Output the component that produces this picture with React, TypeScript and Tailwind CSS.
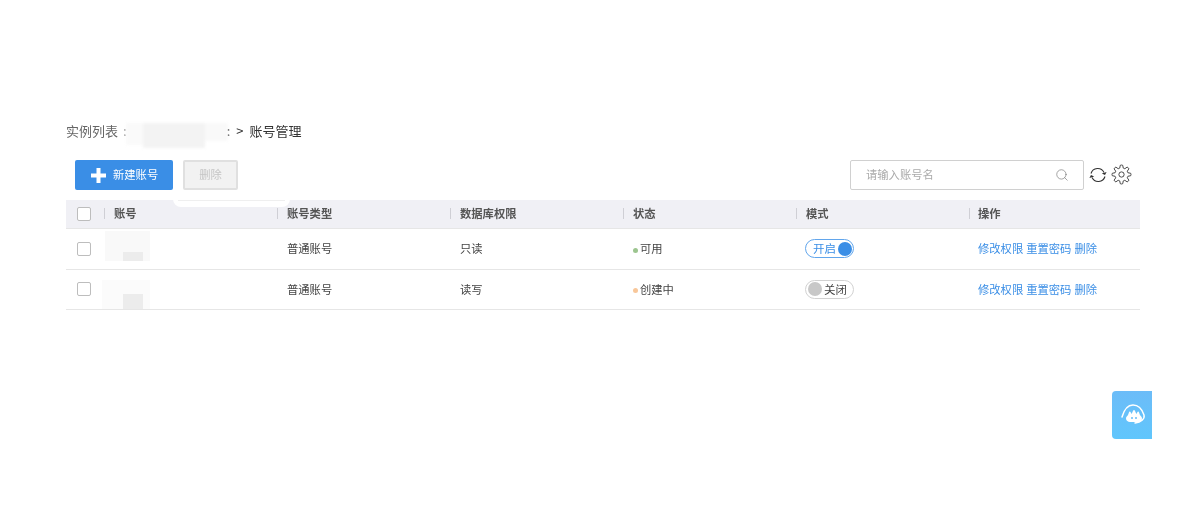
import React from 'react';
import { Search } from 'lucide-react';

const COLS = 'grid grid-cols-[38px_173px_173px_173px_173px_173px_171px] items-center';

// eight toothed outline of the settings cog
const gearPath = (() => {
  const pts: string[] = [];
  const teeth = 8;
  for (let i = 0; i < teeth; i++) {
    const a = (i / teeth) * Math.PI * 2;
    const step = (Math.PI * 2) / teeth;
    const at = (r: number, t: number) => `${(12 + r * Math.cos(t)).toFixed(2)} ${(12 + r * Math.sin(t)).toFixed(2)}`;
    pts.push(`${i === 0 ? 'M' : 'L'}${at(7.6, a - step * 0.34)}`);
    pts.push(`L${at(10.6, a - step * 0.17)}`);
    pts.push(`Q${at(11.2, a)} ${at(10.6, a + step * 0.17)}`);
    pts.push(`L${at(7.6, a + step * 0.34)}`);
  }
  return pts.join(' ') + 'Z';
})();

const Checkbox = () => (
  <span className="ml-[11px] block w-[14px] h-[14px] rounded-[2px] border border-[#bdbdbd] bg-white" />
);

const HeadCell = ({ label, last }: { label: string; last?: boolean }) => (
  <div className="flex items-center">
    <span className={`w-px h-[11px] bg-[#cfcfd5] shrink-0 ${last ? 'mr-[8px]' : 'mr-[9px]'}`} />
    <span>{label}</span>
  </div>
);

const Smudge = ({ second }: { second?: boolean }) => (
  <div className={second ? 'relative h-[29px] w-[48px] -ml-[2px] mt-[10px] bg-[#fbfbfb]' : 'relative h-[30px] w-[45px] ml-px -mt-[6px] bg-[#f9f9f9]'}>
    <span className={second ? 'absolute right-[7px] bottom-0 w-[20px] h-[15px] bg-[#ececec]' : 'absolute right-[7px] bottom-0 w-[20px] h-[9px] bg-[#ececec]'} />
  </div>
);

const Toggle = ({ on }: { on: boolean }) =>
  on ? (
    <div className="ml-[9px] w-[49px] h-[19px] rounded-full border border-[#62a6ec] flex items-center justify-between pl-[7px] pr-px text-[#3a8ee6] text-[11.5px]">
      <span>开启</span>
      <span className="w-[14px] h-[14px] rounded-full bg-[#3a8ee6]" />
    </div>
  ) : (
    <div className="ml-[9px] w-[49px] h-[19px] rounded-full border border-[#d2d2d2] flex items-center justify-between pl-[2px] pr-[6px] text-[#444] text-[11.5px]">
      <span className="w-[14px] h-[14px] rounded-full bg-[#c8c8c8]" />
      <span>关闭</span>
    </div>
  );

const Row = ({ type, perm, status, dot, on, second }: { type: string; perm: string; status: string; dot: string; on: boolean; second?: boolean }) => (
  <div className={`${COLS} h-[40.5px] border-b border-[#e6e6e6] text-[#444]`}>
    <Checkbox />
    <Smudge second={second} />
    <div className="pl-[10px]">{type}</div>
    <div className="pl-[10px]">{perm}</div>
    <div className="pl-[10px] flex items-center">
      <span className={`w-[5px] h-[5px] rounded-full mr-[2px] mt-[3px] ${dot}`} />
      <span>{status}</span>
    </div>
    <Toggle on={on} />
    <div className="pl-[9px] flex gap-[3px] text-[#3a8ee6] whitespace-nowrap">
      <span>修改权限</span>
      <span>重置密码</span>
      <span>删除</span>
    </div>
  </div>
);

export default function App() {
  return (
    <div className="relative h-[509px] w-[1200px] overflow-hidden bg-white pl-[66px] pt-[121px] text-[11.3px] leading-none blur-[0.3px] [font-family:'Noto_Sans_CJK_SC','Liberation_Sans',sans-serif]">
      {/* blurred account name in the crumb */}
      <div className="absolute left-[126px] top-[123px] flex items-start blur-[1.5px]">
        <span className="w-[17px] h-[22px] bg-[#fafafa]" />
        <span className="w-[62px] h-[25px] bg-[#f3f3f3]" />
        <span className="w-[23px] h-[18px] bg-[#f9f9f9]" />
      </div>

      <div className="relative w-[1074px]">
        <div className="flex items-center h-[18px] text-[13px]">
          <span className="text-[#666]">实例列表</span>
          <span className="text-[#aaa] ml-[5px]">:</span>
          <span className="ml-[100px] text-[#777]">:</span>
          <span className="text-[#333] ml-[6px]">&gt;</span>
          <span className="text-[#333] ml-[6px]">账号管理</span>
        </div>

        <div className="flex items-center justify-between mt-[21px] h-[30px] pl-[9px]">
          <div className="flex items-center gap-[10px]">
            <button className="w-[98px] h-[30px] bg-[#3a8ee6] rounded-[2px] text-white flex items-center pl-[16px]">
              <svg width="15" height="15" viewBox="0 0 15 15" className="mr-[7px]">
                <path d="M5.500 0h4v5.500H15v4H9.500V15h-4V9.500H0v-4h5.500z" fill="#fff" />
              </svg>
              新建账号
            </button>
            <button className="w-[55px] h-[30px] bg-[#f2f2f2] border-2 border-[#e0e0e0] rounded-[2px] text-[#c4c4c4]">删除</button>
          </div>
          <div className="flex items-center">
            <div className="w-[234px] h-[30px] border border-[#d0d0d0] rounded-[2px] flex items-center justify-between pl-[15px] pr-[14px] text-[#aaa]">
              <span>请输入账号名</span>
              <Search size={14} strokeWidth={1} className="text-[#666]" />
            </div>
            <svg width="20" height="20" viewBox="0 0 20 20" className="ml-[4px] text-[#333]" fill="none" stroke="currentColor" strokeWidth="1.100">
              <path d="M3 8.500A7 7 0 0 1 16 7.500" />
              <path d="M17 11.500A7 7 0 0 1 4 12.500" />
              <path d="M13.800 8.600 17 10l1.600-3z" fill="currentColor" stroke="none" />
              <path d="M6.200 11.400 3 10l-1.600 3z" fill="currentColor" stroke="none" />
            </svg>
            <svg width="21" height="21" viewBox="0 0 24 24" className="ml-[3px] -mt-[2px] text-[#333]" fill="none" stroke="currentColor" strokeWidth="1">
              <path d={gearPath} strokeLinejoin="round" />
              <circle cx="12" cy="12" r="3" />
            </svg>
            <span className="w-[8px]" />
          </div>
        </div>

        <div className={`${COLS} mt-[10px] h-[29px] bg-[#f0f0f5] border-b border-[#e6e6e6] font-bold text-[#555]`}>
          <Checkbox />
          <HeadCell label="账号" />
          <HeadCell label="账号类型" />
          <HeadCell label="数据库权限" />
          <HeadCell label="状态" />
          <HeadCell label="模式" />
          <HeadCell label="操作" last />
        </div>

        <Row type="普通账号" perm="只读" status="可用" dot="bg-[#9cc58f]" on />
        <Row type="普通账号" perm="读写" status="创建中" dot="bg-[#f8c79a]" on={false} second />
      </div>

      {/* white patch that cuts into the table head under the delete button */}
      <div className="absolute left-[173px] top-[199px] w-[117px] h-[8px] rounded-b-[8px] bg-white blur-[0.4px]">
        <span className="block mx-[5px] mt-px h-px bg-[#efefef]" />
      </div>

      {/* floating help button */}
      <div className="absolute left-[1112px] top-[391px] w-[40px] h-[48px] rounded-l-[4px] bg-gradient-to-b from-[#6cbcf8] to-[#60c6fc] flex items-center justify-center">
        <svg width="30" height="24" viewBox="0 0 30 24" fill="none" className="ml-[4px]">
          <path d="M3 14C5 7 9 2 14 2c5 0 9 4 11 10 1 4-3 7-9 8" stroke="#fff" strokeWidth="1.500" strokeLinecap="round" />
          <path d="M7 15.500c0-1.800 1.400-2.300 2-3.500.6-1.300 1-3.500 1.800-3.500.8 0 1.200 1.800 1.800 2.600.7-1.100 1.200-4.100 2.400-4.100s1.700 3 2.400 4.100c.6-.8 1-2.600 1.800-2.600.8 0 1.200 2.200 1.800 3.500.6 1.200 2 1.700 2 3.500 0 2.200-2 3.500-4 3.500h-8c-2 0-4-1.300-4-3.500z" fill="#fff" />
          <circle cx="13" cy="15" r="1" fill="#66bdf9" />
          <circle cx="17" cy="15" r="1" fill="#66bdf9" />
        </svg>
      </div>
    </div>
  );
}
